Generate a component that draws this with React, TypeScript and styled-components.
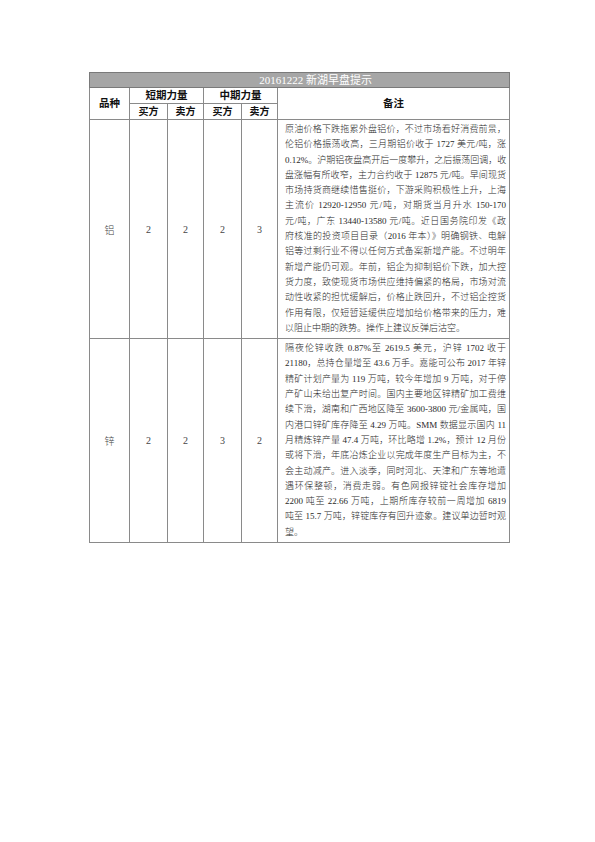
import React from "react";
import styled, { createGlobalStyle } from "styled-components";

const Global = createGlobalStyle`
  html, body { margin: 0; padding: 0; background: #fff; }
`;

const Page = styled.div`
  width: 595px;
  min-height: 842px;
  box-sizing: border-box;
  padding: 72px 0 0 89px;
  background: #fff;
`;

const Table = styled.table`
  border-collapse: collapse;
  table-layout: fixed;
  width: 420px;
  font-family: "Liberation Serif", "Noto Sans CJK SC", serif;
  color: #1a1a1a;
`;

const TitleCell = styled.th`
  background: #a6a6a6;
  color: #fff;
  font-weight: 400;
  font-size: 11px;
  height: 14px;
  line-height: 14px;
  padding: 0 0 0 32px;
  border: 1px solid #7a7a7a;
  text-align: center;
`;

const HeadCell = styled.th<{ $size?: number }>`
  border: 1px solid #8a8a8a;
  font-family: "Liberation Serif", "Noto Sans CJK SC", sans-serif;
  font-weight: 700;
  font-size: ${(p) => p.$size ?? 10}px;
  line-height: 14px;
  padding: 0;
  height: 15px;
  text-align: center;
  vertical-align: middle;
  color: #111;
`;

const ValueCell = styled.td`
  border: 1px solid #8a8a8a;
  text-align: center;
  vertical-align: middle;
  font-size: 10px;
  font-weight: 300;
  padding: 0;
  color: #444;
`;

const NoteCell = styled.td`
  border: 1px solid #8a8a8a;
  padding: 2px 3px 2px 7px;
  vertical-align: top;
`;

const Line = styled.div<{ $last?: boolean }>`
  font-size: 9px;
  font-weight: 300;
  line-height: 15.3px;
  white-space: nowrap;
  text-align: justify;
  text-align-last: ${(p) => (p.$last ? "left" : "justify")};
  color: #2a2a2a;
`;

type Row = { name: string; values: string[]; lines: string[] };

const rows: Row[] = [
  {
    name: "铝",
    values: ["2", "2", "2", "3"],
    lines: [
      "原油价格下跌拖累外盘铝价，不过市场看好消费前景，",
      "伦铝价格振荡收高，三月期铝价收于 1727 美元/吨，涨",
      "0.12%。沪期铝夜盘高开后一度攀升，之后振荡回调，收",
      "盘涨幅有所收窄，主力合约收于 12875 元/吨。早间现货",
      "市场持货商继续惜售挺价，下游采购积极性上升，上海",
      "主流价 12920-12950 元/吨，对期货当月升水 150-170",
      "元/吨，广东 13440-13580 元/吨。近日国务院印发《政",
      "府核准的投资项目目录（2016 年本）》明确钢铁、电解",
      "铝等过剩行业不得以任何方式备案新增产能。不过明年",
      "新增产能仍可观。年前，铝企为抑制铝价下跌，加大控",
      "货力度，致使现货市场供应维持偏紧的格局，市场对流",
      "动性收紧的担忧缓解后，价格止跌回升，不过铝企控货",
      "作用有限，仅短暂延缓供应增加给价格带来的压力，难",
      "以阻止中期的跌势。操作上建议反弹后沽空。",
    ],
  },
  {
    name: "锌",
    values: ["2", "2", "3", "2"],
    lines: [
      "隔夜伦锌收跌 0.87%至 2619.5 美元，沪锌 1702 收于",
      "21180，总持仓量增至 43.6 万手。嘉能可公布 2017 年锌",
      "精矿计划产量为 119 万吨，较今年增加 9 万吨，对于停",
      "产矿山未给出复产时间。国内主要地区锌精矿加工费维",
      "续下滑，湖南和广西地区降至 3600-3800 元/金属吨，国",
      "内港口锌矿库存降至 4.29 万吨。SMM 数据显示国内 11",
      "月精炼锌产量 47.4 万吨，环比略增 1.2%，预计 12 月份",
      "或将下滑，年底冶炼企业以完成年度生产目标为主，不",
      "会主动减产。进入淡季，同时河北、天津和广东等地遭",
      "遇环保整顿，消费走弱。有色网报锌锭社会库存增加",
      "2200 吨至 22.66 万吨，上期所库存较前一周增加 6819",
      "吨至 15.7 万吨，锌锭库存有回升迹象。建议单边暂时观",
      "望。",
    ],
  },
];

export default function App() {
  return (
    <Page>
      <Global />
      <Table>
        <colgroup>
          <col style={{ width: 40 }} />
          <col style={{ width: 38 }} />
          <col style={{ width: 36 }} />
          <col style={{ width: 38 }} />
          <col style={{ width: 36 }} />
          <col style={{ width: 232 }} />
        </colgroup>
        <thead>
          <tr>
            <TitleCell colSpan={6}>20161222 新湖早盘提示</TitleCell>
          </tr>
          <tr>
            <HeadCell rowSpan={2} $size={10.5}>品种</HeadCell>
            <HeadCell colSpan={2} $size={10.5}>短期力量</HeadCell>
            <HeadCell colSpan={2} $size={10.5}>中期力量</HeadCell>
            <HeadCell rowSpan={2} $size={10.5}>备注</HeadCell>
          </tr>
          <tr>
            <HeadCell>买方</HeadCell>
            <HeadCell>卖方</HeadCell>
            <HeadCell>买方</HeadCell>
            <HeadCell>卖方</HeadCell>
          </tr>
        </thead>
        <tbody>
          {rows.map((r) => (
            <tr key={r.name}>
              <ValueCell>{r.name}</ValueCell>
              {r.values.map((v, i) => (
                <ValueCell key={i}>{v}</ValueCell>
              ))}
              <NoteCell>
                {r.lines.map((l, i) => (
                  <Line key={i} $last={i === r.lines.length - 1}>
                    {l}
                  </Line>
                ))}
              </NoteCell>
            </tr>
          ))}
        </tbody>
      </Table>
    </Page>
  );
}
